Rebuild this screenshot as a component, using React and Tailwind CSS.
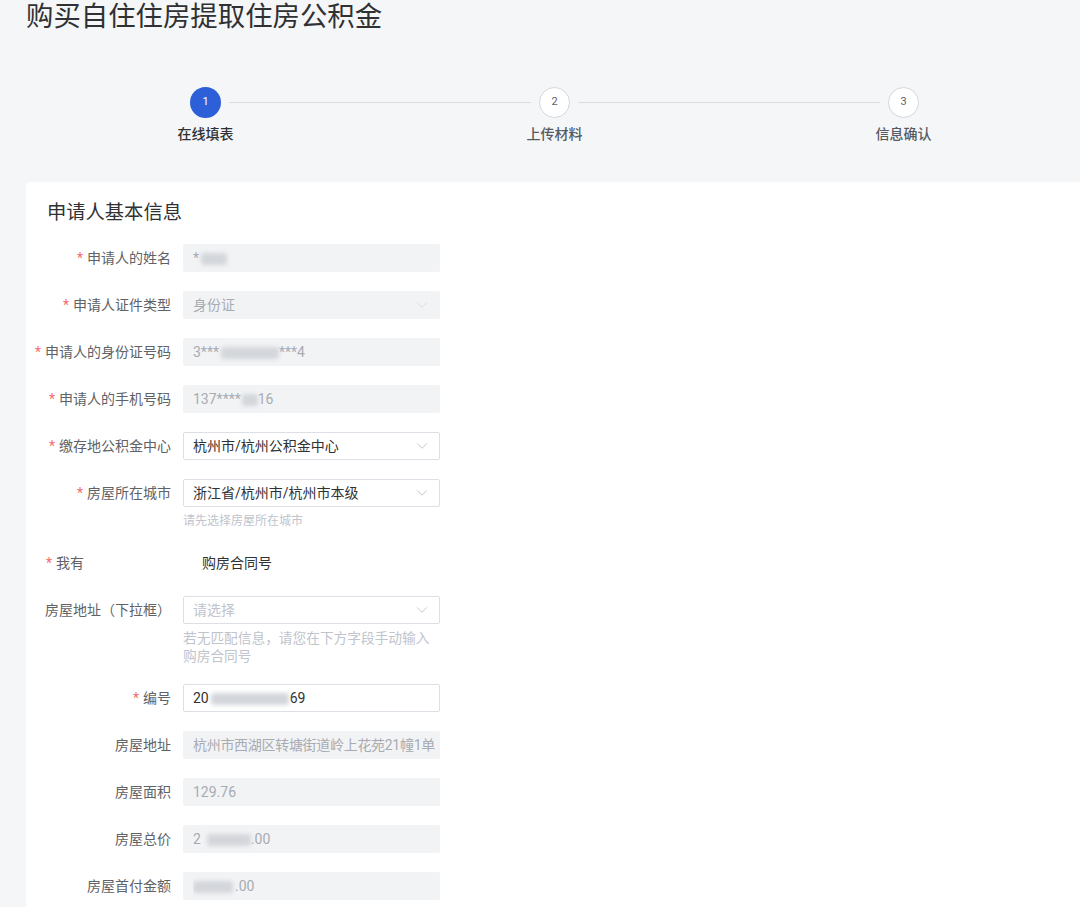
import React from "react";
import { ChevronDown } from "lucide-react";

const FONT = { fontFamily: 'Roboto, "Noto Sans CJK SC", "Noto Sans", sans-serif' };

function Blur({ w, ml = 0, mr = 0 }) {
  return (
    <span
      className="inline-block h-[12px] rounded-[3px] bg-[#d3d6da] blur-[2px] align-middle"
      style={{ width: w, marginLeft: ml, marginRight: mr }}
    />
  );
}

function Label({ required, children }) {
  return (
    <div className="w-[157px] shrink-0 pr-[12px] text-right text-[14px] leading-[28px] text-[#606266] whitespace-nowrap">
      {required && <span className="mr-[4px] text-[#f56c6c]">*</span>}
      {children}
    </div>
  );
}

function Field({ disabled, select, placeholder, tight, children }) {
  return (
    <div
      className={
        "flex h-[28px] w-[257px] items-center rounded-[2px] border pl-[9px] text-[14px] " +
        (tight ? "pr-[3px] " : "pr-[8px] ") +
        (disabled
          ? "border-[#f2f3f5] bg-[#f2f3f5] text-[#a8abb2]"
          : "border-[#dcdfe6] bg-white text-[#303133]")
      }
    >
      <div
        className={
          "flex-1 overflow-hidden whitespace-nowrap " +
          (placeholder ? "text-[#c0c4cc] " : "") +
          (tight ? "tracking-[-0.3px]" : "")
        }
      >
        {children}
      </div>
      {select && (
        <ChevronDown
          size={18}
          strokeWidth={1.1}
          className={disabled ? "text-[#d5d8dd]" : "text-[#b4b8bf]"}
        />
      )}
    </div>
  );
}

function Row({ label, required, hint, hintSize = "text-[12px]", children }) {
  return (
    <div className="mb-[19px] flex items-start">
      <Label required={required}>{label}</Label>
      <div>
        {children}
        {hint && (
          <div className={"mt-[5px] w-[250px] leading-[18px] text-[#c0c4cc] " + hintSize}>{hint}</div>
        )}
      </div>
    </div>
  );
}

function Step({ n, label, active }) {
  return (
    <div className="flex w-[31px] shrink-0 flex-col items-center">
      <div
        className={
          "flex h-[31px] w-[31px] items-center justify-center rounded-full text-[11px] " +
          (active
            ? "bg-[#2c5fd8] text-white"
            : "border border-[#d4d7dc] bg-white text-[#606266]")
        }
      >
        {n}
      </div>
      <div
        className={
          "mt-[6px] whitespace-nowrap text-[14px] leading-[20px] font-medium " +
          (active ? "text-[#303133]" : "text-[#555a61]")
        }
      >
        {label}
      </div>
    </div>
  );
}

export default function App() {
  return (
    <div className="min-h-[907px] w-[1080px] overflow-hidden bg-[#f5f6f8]" style={FONT}>
      <h1 className="pl-[26px] text-[27.4px] leading-[34px] font-normal text-[#303133]">
        购买自住住房提取住房公积金
      </h1>

      <div className="ml-[190px] mt-[53px] flex w-[729px] items-start">
        <Step n="1" label="在线填表" active />
        <div className="mx-[8px] mt-[15px] h-px flex-1 bg-[#d9dce1]" />
        <Step n="2" label="上传材料" />
        <div className="mx-[8px] mt-[15px] h-px flex-1 bg-[#d9dce1]" />
        <Step n="3" label="信息确认" />
      </div>

      <div className="ml-[26px] mt-[38px] min-h-[760px] rounded-tl-[4px] bg-white pt-[18px]">
        <div className="pl-[21px] text-[19.3px] leading-[26px] text-[#303133]">申请人基本信息</div>

        <div className="mt-[18px]">
          <Row label="申请人的姓名" required>
            <Field disabled>
              *<Blur w={26} ml={2} />
            </Field>
          </Row>
          <Row label="申请人证件类型" required>
            <Field disabled select>身份证</Field>
          </Row>
          <Row label="申请人的身份证号码" required>
            <Field disabled>
              3***<Blur w={58} ml={2} />***4
            </Field>
          </Row>
          <Row label="申请人的手机号码" required>
            <Field disabled>
              137****<Blur w={16} ml={1} />16
            </Field>
          </Row>
          <Row label="缴存地公积金中心" required>
            <Field select>杭州市/杭州公积金中心</Field>
          </Row>
          <Row label="房屋所在城市" required hint="请先选择房屋所在城市">
            <Field select>浙江省/杭州市/杭州市本级</Field>
          </Row>

          <div className="mb-[19px] flex items-start text-[14px] leading-[28px]">
            <div className="w-[176px] shrink-0 pl-[20px] text-[#606266]">
              <span className="mr-[4px] text-[#f56c6c]">*</span>我有
            </div>
            <div className="text-[#303133]">购房合同号</div>
          </div>

          <Row
            label="房屋地址（下拉框）"
            hintSize="text-[13.7px]"
            hint="若无匹配信息，请您在下方字段手动输入购房合同号"
          >
            <Field select placeholder>请选择</Field>
          </Row>
          <Row label="编号" required>
            <Field>
              20<Blur w={78} ml={2} mr={1} />69
            </Field>
          </Row>
          <Row label="房屋地址">
            <Field disabled tight>杭州市西湖区转塘街道岭上花苑21幢1单</Field>
          </Row>
          <Row label="房屋面积">
            <Field disabled>129.76</Field>
          </Row>
          <Row label="房屋总价">
            <Field disabled>
              2<Blur w={44} ml={6} />.00
            </Field>
          </Row>
          <Row label="房屋首付金额">
            <Field disabled>
              <Blur w={40} mr={2} />.00
            </Field>
          </Row>
        </div>
      </div>
    </div>
  );
}
